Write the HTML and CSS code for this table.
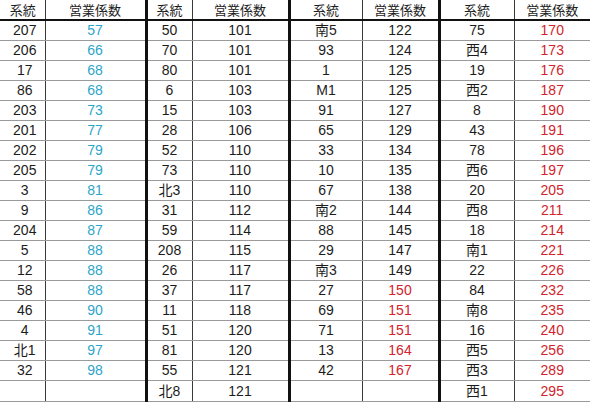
FILE: index.html
```html
<!DOCTYPE html>
<html lang="ja">
<head>
<meta charset="utf-8">
<link rel="stylesheet" href="styles.css">
</head>
<body>
<table class="sheet">
<colgroup>
<col class="c-a1"><col class="c-a2"><col class="c-b1"><col class="c-b2"><col class="c-c1"><col class="c-c2"><col class="c-d1"><col class="c-d2">
</colgroup>
<thead>
<tr><th class="first">系統</th><th class="end">営業係数</th><th>系統</th><th class="end">営業係数</th><th>系統</th><th class="end">営業係数</th><th>系統</th><th>営業係数</th></tr>
</thead>
<tbody>
<tr><td class="first">207</td><td class="end blue">57</td><td>50</td><td class="end">101</td><td>南5</td><td class="end">122</td><td>75</td><td class="red">170</td></tr>
<tr><td class="first">206</td><td class="end blue">66</td><td>70</td><td class="end">101</td><td>93</td><td class="end">124</td><td>西4</td><td class="red">173</td></tr>
<tr><td class="first">17</td><td class="end blue">68</td><td>80</td><td class="end">101</td><td>1</td><td class="end">125</td><td>19</td><td class="red">176</td></tr>
<tr><td class="first">86</td><td class="end blue">68</td><td>6</td><td class="end">103</td><td>M1</td><td class="end">125</td><td>西2</td><td class="red">187</td></tr>
<tr><td class="first">203</td><td class="end blue">73</td><td>15</td><td class="end">103</td><td>91</td><td class="end">127</td><td>8</td><td class="red">190</td></tr>
<tr><td class="first">201</td><td class="end blue">77</td><td>28</td><td class="end">106</td><td>65</td><td class="end">129</td><td>43</td><td class="red">191</td></tr>
<tr><td class="first">202</td><td class="end blue">79</td><td>52</td><td class="end">110</td><td>33</td><td class="end">134</td><td>78</td><td class="red">196</td></tr>
<tr><td class="first">205</td><td class="end blue">79</td><td>73</td><td class="end">110</td><td>10</td><td class="end">135</td><td>西6</td><td class="red">197</td></tr>
<tr><td class="first">3</td><td class="end blue">81</td><td>北3</td><td class="end">110</td><td>67</td><td class="end">138</td><td>20</td><td class="red">205</td></tr>
<tr><td class="first">9</td><td class="end blue">86</td><td>31</td><td class="end">112</td><td>南2</td><td class="end">144</td><td>西8</td><td class="red">211</td></tr>
<tr><td class="first">204</td><td class="end blue">87</td><td>59</td><td class="end">114</td><td>88</td><td class="end">145</td><td>18</td><td class="red">214</td></tr>
<tr><td class="first">5</td><td class="end blue">88</td><td>208</td><td class="end">115</td><td>29</td><td class="end">147</td><td>南1</td><td class="red">221</td></tr>
<tr><td class="first">12</td><td class="end blue">88</td><td>26</td><td class="end">117</td><td>南3</td><td class="end">149</td><td>22</td><td class="red">226</td></tr>
<tr><td class="first">58</td><td class="end blue">88</td><td>37</td><td class="end">117</td><td>27</td><td class="end red">150</td><td>84</td><td class="red">232</td></tr>
<tr><td class="first">46</td><td class="end blue">90</td><td>11</td><td class="end">118</td><td>69</td><td class="end red">151</td><td>南8</td><td class="red">235</td></tr>
<tr><td class="first">4</td><td class="end blue">91</td><td>51</td><td class="end">120</td><td>71</td><td class="end red">151</td><td>16</td><td class="red">240</td></tr>
<tr><td class="first">北1</td><td class="end blue">97</td><td>81</td><td class="end">120</td><td>13</td><td class="end red">164</td><td>西5</td><td class="red">256</td></tr>
<tr><td class="first">32</td><td class="end blue">98</td><td>55</td><td class="end">121</td><td>42</td><td class="end red">167</td><td>西3</td><td class="red">289</td></tr>
<tr class="last"><td class="first"></td><td class="end"></td><td>北8</td><td class="end">121</td><td></td><td class="end"></td><td>西1</td><td class="red">295</td></tr>
</tbody>
</table>
</body>
</html>
```
FILE: styles.css
```css
html, body {
  margin: 0;
  padding: 0;
  background: #ffffff;
}
.sheet {
  border-collapse: collapse;
  table-layout: fixed;
  width: 590px;
  font-family: "Liberation Sans", "Noto Sans CJK JP", sans-serif;
  font-size: 14px;
  color: #1c1c1c;
}
.c-a1 { width: 45px; }
.c-a2 { width: 101px; }
.c-b1 { width: 46px; }
.c-b2 { width: 97px; }
.c-c1 { width: 73px; }
.c-c2 { width: 77px; }
.c-d1 { width: 75px; }
.c-d2 { width: 76px; }
.sheet th, .sheet td {
  height: 19px;
  padding: 0;
  text-align: center;
  line-height: 19px;
  border-right: 1px solid #3a3a3a;
  border-bottom: 1px solid #9a9a9a;
  white-space: nowrap;
  overflow: hidden;
}
.sheet th {
  font-weight: normal;
  font-size: 13px;
  height: 19px;
  border-bottom: 2px solid #111111;
  font-family: "Noto Sans CJK JP", sans-serif;
}
.sheet .first {
  padding-left: 5px;
}
.sheet th.first {
  padding-left: 1px;
}
.sheet th:last-child, .sheet td:last-child {
  border-right: none;
}
.sheet .end {
  border-right: 3px solid #111111;
}
.sheet .last td {
  height: 20px;
}
.blue { color: #2da5c9; }
.red { color: #d3232c; }
```
